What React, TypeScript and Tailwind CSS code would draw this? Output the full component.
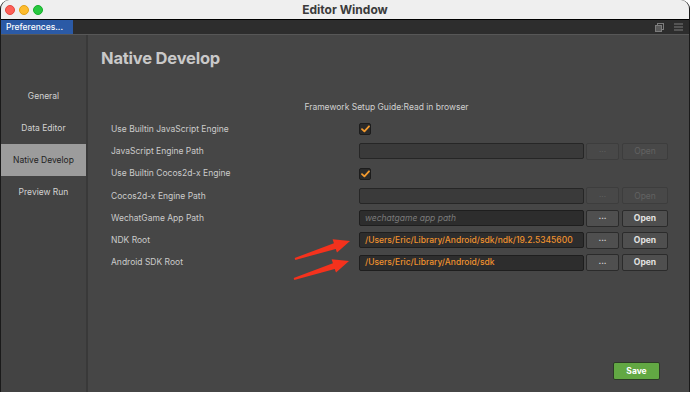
import React from 'react'

const sections = ['General', 'Data Editor', 'Native Develop', 'Preview Run']

type Row = {
    label: string
    kind: 'check' | 'path'
    value?: string
    placeholder?: string
    disabled?: boolean
}

const rows: Row[] = [
    { label: 'Use Builtin JavaScript Engine', kind: 'check' },
    { label: 'JavaScript Engine Path', kind: 'path', disabled: true },
    { label: 'Use Builtin Cocos2d-x Engine', kind: 'check' },
    { label: 'Cocos2d-x Engine Path', kind: 'path', disabled: true },
    { label: 'WechatGame App Path', kind: 'path', placeholder: 'wechatgame app path' },
    { label: 'NDK Root', kind: 'path', value: '/Users/Eric/Library/Android/sdk/ndk/19.2.5345600' },
    { label: 'Android SDK Root', kind: 'path', value: '/Users/Eric/Library/Android/sdk' },
]

function Checkbox() {
    return (
        <div className="w-[12px] h-[12px] rounded-[2px] bg-[#2a2a2a] border border-[#1c1c1c] flex items-center justify-center">
            <svg width="9" height="8" viewBox="0 0 9 8">
                <path d="M1 4.2 L3.4 6.4 L8 1.3" stroke="#f29a2e" strokeWidth="1.8" fill="none" strokeLinecap="round" strokeLinejoin="round" />
            </svg>
        </div>
    )
}

function PathField({ row }: { row: Row }) {
    const btn = row.disabled
        ? 'bg-[#484848] border-[#3d3d3d] text-[#626262]'
        : 'bg-[#4f4f4f] border-[#2b2b2b] text-[#e2e2e2] font-bold'
    return (
        <div className="flex items-center gap-[2px]">
            <div className={`w-[225px] h-[16px] rounded-[2px] border flex items-center px-[5px] text-[8.5px] overflow-hidden whitespace-nowrap ${row.disabled ? 'bg-[#3a3a3a] border-[#262626]' : 'bg-[#2d2d2d] border-[#1e1e1e]'}`}>
                {row.value && <span className="text-[#f0922e] font-medium">{row.value}</span>}
                {row.placeholder && <span className="text-[#7a7a7a] italic">{row.placeholder}</span>}
            </div>
            <div className={`w-[33px] h-[17px] rounded-[2px] border flex items-center justify-center text-[8px] leading-none ${btn}`}>···</div>
            <div className={`ml-[1px] w-[46px] h-[17px] rounded-[2px] border flex items-center justify-center text-[8.5px] ${btn}`}>Open</div>
        </div>
    )
}

export default function App() {
    return (
        <div className="relative w-[690px] h-[396px] bg-white overflow-hidden font-['Inter',sans-serif]">
            <div className="h-[392px] flex flex-col rounded-t-[9px] overflow-hidden border-x border-[#1a1a1a] bg-[#454545]">
                <div className="h-[20px] grid grid-cols-[1fr_auto_1fr] items-center bg-[#efefef] border-b border-black">
                    <div className="flex items-center gap-[4px] pl-[4px]">
                        <span className="w-[10px] h-[10px] rounded-full bg-[#fe5f57] border border-[#e2463f]" />
                        <span className="w-[10px] h-[10px] rounded-full bg-[#febc2e] border border-[#e1a116]" />
                        <span className="w-[10px] h-[10px] rounded-full bg-[#28c840] border border-[#14ae2a]" />
                    </div>
                    <div className="text-[12px] font-bold text-[#3b3b3b]">Editor Window</div>
                    <div />
                </div>
                <div className="h-[15px] flex items-stretch justify-between bg-[#2d2d2d] border-b border-[#575757]">
                    <div className="w-[72px] bg-[#2b5aa6] text-white text-[8.5px] font-medium flex items-center pl-[5px]">Preferences...</div>
                    <div className="flex items-center gap-[10px] pr-[6px]">
                        <svg width="9" height="9" viewBox="0 0 9 9">
                            <rect x="2.5" y="0.5" width="6" height="6" fill="none" stroke="#7c7c7c" />
                            <rect x="0.5" y="2.5" width="6" height="6" fill="#5a5a5a" stroke="#7c7c7c" />
                        </svg>
                        <svg width="9" height="8" viewBox="0 0 9 8">
                            <path d="M0 1 H9 M0 4 H9 M0 7 H9" stroke="#7c7c7c" strokeWidth="1.2" />
                        </svg>
                    </div>
                </div>
                <div className="flex-1 flex">
                    <div className="w-[87px] bg-[#434343] border-r-2 border-[#393939] pt-[45px]">
                        {sections.map(s => (
                            <div
                                key={s}
                                className={`h-[32px] flex items-center justify-center text-[8.5px] ${s === 'Native Develop' ? 'bg-[#9c9c9c] text-[#1f1f1f]' : 'text-[#d2d2d2]'}`}
                            >{s}</div>
                        ))}
                    </div>
                    <div className="flex-1 flex flex-col bg-[#464646]">
                        <div className="h-[46px] flex items-center pl-[13px] text-[16.5px] font-bold text-[#c9c9c9] tracking-[-0.2px]">Native Develop</div>
                        <div className="mt-[15px] h-[22px] flex items-center justify-center text-[8.5px] text-[#d0d0d0] pr-[4px]">Framework Setup Guide:Read in browser</div>
                        <div className="flex flex-col pl-[23px]">
                            {rows.map(r => (
                                <div key={r.label} className="h-[22.25px] flex items-center">
                                    <div className="w-[248px] text-[8.5px] text-[#cbcbcb]">{r.label}</div>
                                    {r.kind === 'check' ? <Checkbox /> : <PathField row={r} />}
                                </div>
                            ))}
                        </div>
                        <div className="mt-auto flex justify-end pr-[29px] pb-[12px]">
                            <button className="w-[47px] h-[18px] rounded-[2px] bg-[#62a843] border border-[#2c3a26] text-white text-[8.5px] font-bold">Save</button>
                        </div>
                    </div>
                </div>
            </div>
            <svg className="absolute inset-0 pointer-events-none" width="690" height="396" viewBox="0 0 690 396">
                <polygon points="295.3,260 335.7,248.9 337,252.6 350,241 332.6,239.3 333.9,243.2 294.7,258" fill="#f4321d" />
                <polygon transform="translate(-1,20)" points="295.3,260 335.7,248.9 337,252.6 350,241 332.6,239.3 333.9,243.2 294.7,258" fill="#f4321d" />
            </svg>
        </div>
    )
}
